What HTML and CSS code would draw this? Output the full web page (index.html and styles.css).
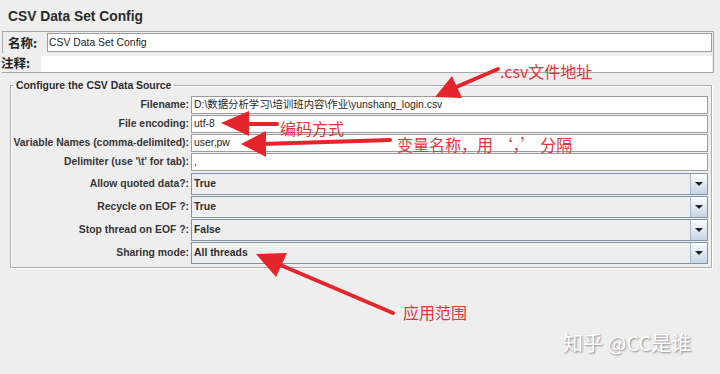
FILE: index.html
```html
<!DOCTYPE html>
<html lang="zh-CN">
<head>
    <meta charset="UTF-8">
    <meta name="viewport" content="width=device-width, initial-scale=1.0">
    <title>CSV Data Set Config</title>
    <link rel="stylesheet" href="styles.css">
</head>
<body>
    <section class="page">
        <h1 class="title">CSV Data Set Config</h1>

        <section class="name-panel">
            <div class="name-row">
                <span class="cn-label">名称:</span>
                <div class="field">CSV Data Set Config</div>
            </div>
            <div class="comment-row">
                <span class="cn-label comment-label">注释:</span>
                <div class="comment-area"></div>
            </div>
        </section>

        <fieldset class="source">
            <legend>Configure the CSV Data Source</legend>
            <div class="rows">
                <label class="label">Filename:</label>
                <div class="field">D:\数据分析学习\培训班内容\作业\yunshang_login.csv</div>

                <label class="label">File encoding:</label>
                <div class="field">utf-8</div>

                <label class="label">Variable Names (comma-delimited):</label>
                <div class="field">user,pw</div>

                <label class="label">Delimiter (use '\t' for tab):</label>
                <div class="field">,</div>

                <label class="label combo-label first">Allow quoted data?:</label>
                <div class="combo first"><span class="value">True</span><span class="drop"><i></i></span></div>

                <label class="label combo-label">Recycle on EOF ?:</label>
                <div class="combo"><span class="value">True</span><span class="drop"><i></i></span></div>

                <label class="label combo-label">Stop thread on EOF ?:</label>
                <div class="combo"><span class="value">False</span><span class="drop"><i></i></span></div>

                <label class="label combo-label">Sharing mode:</label>
                <div class="combo"><span class="value">All threads</span><span class="drop"><i></i></span></div>
            </div>
        </fieldset>

        <!-- 红色标注 -->
        <svg class="arrows" width="720" height="374" viewBox="0 0 720 374">
            <g fill="#e4262c" stroke="#e4262c" stroke-linecap="round">
                <line x1="498" y1="69" x2="454" y2="88" stroke-width="4"/>
                <polygon points="435,97 462,98 452,76" stroke="none"/>

                <line x1="277" y1="124" x2="246" y2="124" stroke-width="4"/>
                <polygon points="221,123 249,111 249,136" stroke="none"/>

                <line x1="390" y1="140" x2="262" y2="144" stroke-width="4"/>
                <polygon points="241,144 266,131 266,157" stroke="none"/>

                <line x1="393" y1="313" x2="278" y2="264" stroke-width="4"/>
                <polygon points="256,254 287,253 276,277" stroke="none"/>
            </g>
        </svg>
        <span class="note note-file">.csv文件地址</span>
        <span class="note note-enc">编码方式</span>
        <span class="note note-var">变量名称，用 ‘，’ 分隔</span>
        <span class="note note-share">应用范围</span>

        <span class="watermark">知乎 @CC是谁</span>
    </section>
</body>
</html>
```

FILE: styles.css
```css
*{margin: 0;padding: 0;box-sizing: border-box;}
body{
    width: 720px; height: 374px; overflow: hidden;
    background-color: #eeeeee;
    font-family: "Liberation Sans", Arial, "Noto Sans CJK SC", sans-serif;
    color: #333333;}
.page{position: relative; width: 720px; height: 374px;}

.title{
    font-size: 13.8px; font-weight: bold; line-height: 18px;
    padding: 8px 0 0 8px; height: 31px; color: #2b2b2b;}

/* имя и комментарий */
.name-panel{
    margin: 0 6px 0 2px;
    border: 1px solid #a9a9a9; border-left: none;}
.name-row{
    display: flex; align-items: center; height: 21px;
    border-left: 1px solid #a9a9a9;}
.cn-label{
    font-family: "Noto Sans CJK SC", sans-serif; font-weight: bold;
    font-size: 12.5px; line-height: 16px; color: #222;
    width: 44px; padding-left: 5px;}
.name-row .field{flex: 1; height: 19px; margin-right: 1px; line-height: 17px; padding-left: 1px;}
.comment-row{display: flex; height: 19px;}
.comment-label{width: 40px; padding-left: 0; margin-left: -1px; padding-top: 2px;}
.comment-area{flex: 1; background-color: #ffffff; margin-top: 3px; margin-right: 1px;}

.field{
    background-color: #ffffff; border: 1px solid #9c9c9c;
    font-size: 10.4px; line-height: 16px; padding-left: 2px;
    color: #1e1e1e; white-space: nowrap; overflow: hidden;}

/* источник данных */
.source{
    margin: 6px 8px 0 10px; padding: 0 3px 3px 1px;
    border: 1px solid #adadad;
    box-shadow: inset 1px 1px 0 #ffffff, 1px 1px 0 #ffffff;
    min-width: 0;}
.source legend{
    font-size: 10.4px; font-weight: bold; line-height: 13px;
    margin-left: 1px; padding: 0 3px; color: #2b2b2b;}
.rows{
    display: grid; grid-template-columns: 177px 1fr;
    column-gap: 2px; row-gap: 1px; margin-top: 4px;}
.rows .field{height: 18px;}
.label{
    font-size: 10.4px; font-weight: bold; color: #363636;
    text-align: right; line-height: 18px; white-space: nowrap;}
.combo-label{line-height: 22px;}
.first{margin-top: 1px;}

.combo{
    display: flex; height: 22px;
    border: 1px solid #7f93ab; background-color: #eeeeee;}
.combo .value{
    flex: 1; font-size: 10.4px; font-weight: bold; line-height: 20px;
    padding-left: 2px; color: #2e2e2e;}
.drop{
    width: 17px; display: flex; justify-content: center; align-items: center;
    border-left: 1px solid #a7b7ca;
    background: linear-gradient(#fcfdff, #dde7f1 55%, #c6d5e4);}
.drop i{
    width: 0; height: 0;
    border-left: 4px solid transparent; border-right: 4px solid transparent;
    border-top: 4px solid #222222;}

/* пометки */
.arrows{position: absolute; left: 0; top: 0;}
.note{
    position: absolute; font-family: "Noto Sans CJK SC", sans-serif;
    font-size: 16px; line-height: 16px; color: #e2353b; white-space: nowrap;}
.note-file{left: 500px; top: 63px;}
.note-enc{left: 280px; top: 120px;}
.note-var{left: 397px; top: 136px;}
.note-share{left: 403px; top: 304px;}

.watermark{
    position: absolute; left: 563px; top: 332px;
    font-family: "Noto Sans CJK SC", sans-serif; font-size: 20px; line-height: 22px;
    color: #ffffff; text-shadow: 1px 1px 2px rgba(0,0,0,0.45);
    white-space: nowrap;}
```
